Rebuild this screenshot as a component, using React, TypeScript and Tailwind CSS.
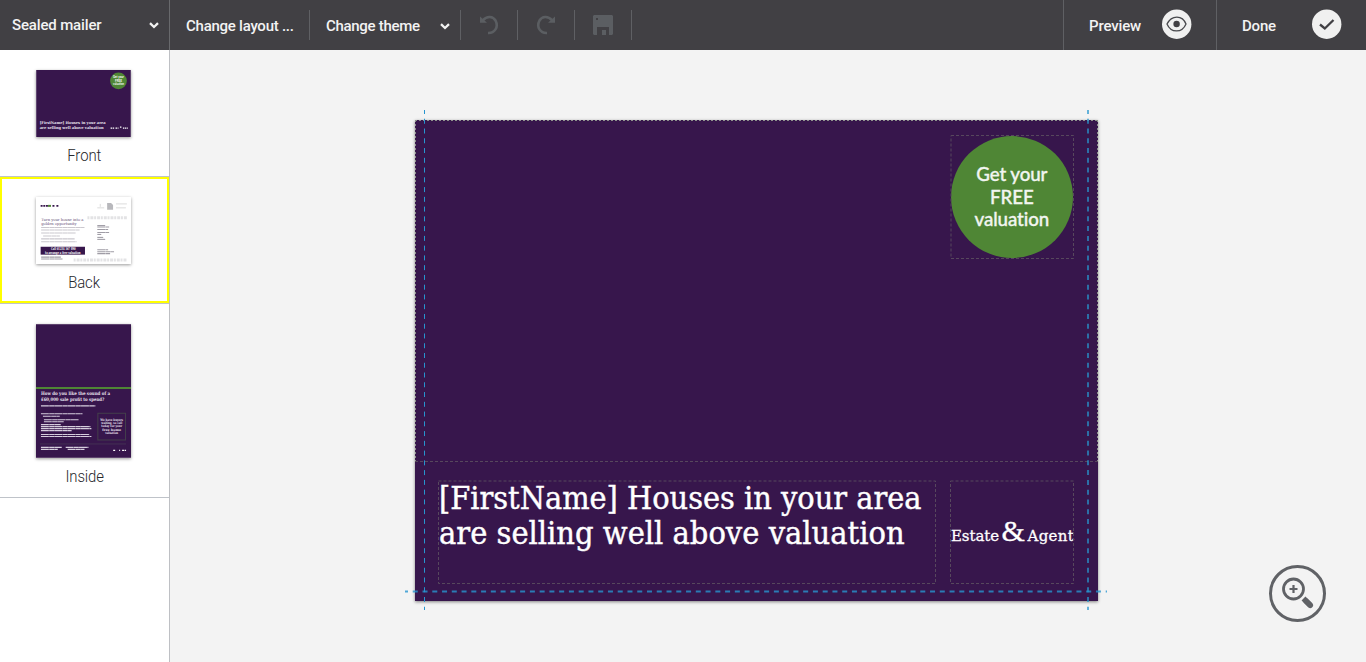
import type { ReactNode } from "react";

function Chevron() {
  return (
    <svg width="10" height="7" viewBox="0 0 10 7" fill="none" stroke="#f3f3f3" strokeWidth="2.300">
      <path d="M1 1.200 5 5l4-3.800" />
    </svg>
  );
}

function IconCell({ children }: { children: ReactNode }) {
  return <div className="flex h-[30px] w-[57px] items-center justify-center border-r border-[#5f6064] text-[#5b5e62]">{children}</div>;
}

function Undo({ flip = false }: { flip?: boolean }) {
  return (
    <svg width="20" height="20" viewBox="0 0 20 20" fill="none" className={flip ? "-scale-x-100" : ""}>
      <path d="M4 5.200C8.200 .5 14 1.300 16.500 5.500C20 12.200 15.500 18.300 9 18" stroke="currentColor" strokeWidth="2.600" />
      <path d="M1 1.500v6.300h7z" fill="currentColor" />
    </svg>
  );
}

function Toolbar() {
  return (
    <header className="flex h-[50px] shrink-0 items-center bg-[#414044] font-['Roboto',sans-serif] text-[15px] font-medium text-[#f3f3f3]">
      <div className="flex h-full w-[170px] items-center justify-between border-r border-[#68696c] pr-[10px] pl-3">
        <span className="tracking-[-0.15px]">Sealed mailer</span>
        <Chevron />
      </div>
      <div className="flex h-[30px] w-[140px] items-center border-r border-[#5f6064] pl-4 whitespace-nowrap">
        <span className="pt-0.5 tracking-[-0.25px]">Change layout ...</span>
      </div>
      <div className="flex h-[30px] w-[151px] items-center justify-between border-r border-[#5f6064] pt-0.5 pr-[10px] pl-4">
        <span className="tracking-[-0.3px]">Change theme</span>
        <Chevron />
      </div>
      <IconCell><Undo /></IconCell>
      <IconCell><Undo flip /></IconCell>
      <IconCell>
        <svg width="20" height="20" viewBox="0 0 20 20" fill="currentColor">
          <path fillRule="evenodd" d="M1 0h18l1 1v18l-1 1h-3v-8H4v8H1l-1-1V1zM3 3v2h2V3zM9 15h4v5H9z" />
        </svg>
      </IconCell>
      <div className="ml-auto flex h-full items-center">
        <div className="flex h-full w-[153px] items-center justify-between border-l border-[#5f6064] pr-[24px] pl-[25px]">
          <span className="pt-0.5 tracking-[-0.15px]">Preview</span>
          <svg width="30" height="30" viewBox="0 0 30 30" className="-mt-0.5">
            <circle cx="14.700" cy="15.200" r="14.700" fill="#f0f0f0" />
            <path d="M5 15C9.500 5.700 20.500 5.700 24 15 20 24.300 9 24.300 5 15z" fill="none" stroke="#47484c" strokeWidth="1.300" />
            <circle cx="14.600" cy="15" r="3.200" fill="#414044" />
          </svg>
        </div>
        <div className="flex h-full w-[150px] items-center justify-between border-l border-[#5f6064] pr-[24px] pl-[25px]">
          <span className="pt-0.5 tracking-[-0.2px]">Done</span>
          <svg width="30" height="30" viewBox="0 0 30 30" className="-mt-0.5">
            <circle cx="14.700" cy="15.200" r="14.700" fill="#f0f0f0" />
            <path d="m8 15.500 4.800 4L21.500 11" fill="none" stroke="#414044" strokeWidth="2.300" />
          </svg>
        </div>
      </div>
    </header>
  );
}

const PURPLE = "#37164c";

function Line({ x, y, w, children, size = 4, color = "#e8e1ed", bold = true, serif = true }: { x: number; y: number; w: number; children: string; size?: number; color?: string; bold?: boolean; serif?: boolean }) {
  return <text x={x} y={y} textLength={w} lengthAdjust="spacingAndGlyphs" fontSize={size} fill={color} fontWeight={bold ? 700 : 400} fontFamily={serif ? "DejaVu Serif, serif" : "Lato, sans-serif"}>{children}</text>;
}

function Bars({ rows, color }: { rows: number[][]; color: string }) {
  return <>{rows.map(([x, y, w], i) => <path key={i} d={`M${x} ${y}h${w}`} stroke={color} strokeWidth="1.100" strokeDasharray="8 .3 5 .2" />)}</>;
}

function FrontThumb() {
  return (
    <svg width="95" height="67" viewBox="0 0 96 68" className="mb-px shadow-[0_1px_3px_#0006]">
      <rect width="96" height="68" fill={PURPLE} />
      <circle cx="83.500" cy="11" r="8.500" fill="#4f8635" />
      <Line x={78} y={8.500} w={11} size={3.500} serif={false} color="#fff">Get your</Line>
      <Line x={80} y={12} w={7} size={3.500} serif={false} color="#fff">FREE</Line>
      <Line x={78} y={15.500} w={11} size={3.500} serif={false} color="#fff">valuation</Line>
      <Line x={3.500} y={54.500} w={67}>[FirstName] Houses in your area</Line>
      <Line x={3.500} y={59.500} w={65}>are selling well above valuation</Line>
      <path d="M75.500 59h4m1 0h3m1.500-1h2m1 1h5" stroke="#fff" strokeWidth="1.200" strokeDasharray="1.500 .6" />
    </svg>
  );
}

function BackThumb() {
  return (
    <svg width="95" height="67" viewBox="0 0 96 68" className="mb-px shadow-[0_1px_3px_#0006]">
      <rect width="96" height="68" fill="#fff" />
      <path d="M4.500 9h8m4 0h2m2 0h2" stroke={PURPLE} strokeWidth="1.800" strokeDasharray="2 .7" />
      <path d="M12 9h3" stroke="#4f8635" strokeWidth="2" />
      <path d="M62 11h7m-4-4v3M81 7h11m-11 4h10" stroke="#ccc" strokeWidth=".7" />
      <path d="M72 6h4l2 2v5h-6z" fill="#b8b8bc" />
      <Line x={5} y={24} w={43} color="#655078" bold={false}>Turn your house into a</Line>
      <Line x={5} y={28} w={36} color="#655078" bold={false}>golden opportunity</Line>
      <path d="M52 21h40M38 64h54" stroke="#e3e3e5" strokeWidth="3" strokeDasharray="2 1 3 .8" />
      <Bars color="#cac7ce" rows={[[5, 31, 44], [5, 33.500, 39], [5, 36.500, 35], [7, 39.500, 17], [5, 42.500, 34], [5, 45.500, 36]]} />
      <Bars color="#9f9ca5" rows={[[62, 29, 8], [62, 30.500, 12], [62, 33, 11], [62, 36, 12], [62, 38, 4], [62, 41, 6], [62, 43, 8], [62, 53.500, 11], [62, 55.500, 17], [62, 57.500, 13], [5, 61, 20], [5, 63, 22]]} />
      <rect x="4.500" y="50.500" width="45" height="8" fill={PURPLE} />
      <Line x={15} y={54} w={25} color="#fff">Call 01234 567 890</Line>
      <Line x={9} y={57.500} w={36} color="#fff">to arrange a free valuation</Line>
    </svg>
  );
}

function InsideThumb() {
  return (
    <svg width="95" height="134" viewBox="0 0 96 135" className="mb-px shadow-[0_1px_3px_#0006]">
      <rect width="96" height="135" fill={PURPLE} />
      <path d="M0 64.500h96" stroke="#4f8635" strokeWidth="2" />
      <rect x="62.500" y="90" width="28" height="27" fill="none" stroke="#44404b" />
      <Line x={5} y={72} w={70} size={4.800}>How do you like the sound of a</Line>
      <Line x={5} y={78} w={64} size={4.800}>£60,000 sale profit to spend?</Line>
      <Bars color="#d6cedd" rows={[[5, 82.500, 55], [5, 90.500, 42], [7, 93, 17], [8, 96.500, 35], [8, 98.500, 20], [5, 101.500, 20], [5, 103.500, 50], [5, 105.500, 51], [5, 107.500, 31], [5, 111.500, 49], [5, 113.500, 51], [5, 124.500, 21], [5, 126.500, 17], [30, 124.500, 23], [32, 126.500, 17]]} />
      <Line x={65} y={97.500} w={23} size={3.500}>We have buyers</Line>
      <Line x={66} y={100.900} w={21} size={3.500}>waiting, so call</Line>
      <Line x={66} y={104.300} w={21} size={3.500}>today for your</Line>
      <Line x={67} y={107.700} w={19} size={3.500}>free home</Line>
      <Line x={70} y={111} w={13} size={3.500}>valuation</Line>
      <path d="M4 121h87" stroke="#4a3b55" strokeWidth=".7" />
      <path d="M78 127.500h2m4 0h1m2 0h4" stroke="#fff" strokeWidth="1.300" strokeDasharray="2 .6" />
    </svg>
  );
}

function PageItem({ label, children, selected = false, tall = false }: { label: string; children: ReactNode; selected?: boolean; tall?: boolean }) {
  return (
    <div className={`flex flex-col items-center border-b border-b-[#bfc3c9] pt-5 pr-[2px] ${tall ? "h-[194px]" : "h-[127px]"} ${selected ? "shadow-[inset_0_0_0_2px_#ffff00]" : ""}`}>
      {children}
      <span className="mt-[6px] ml-0.5 scale-x-[0.93] text-[16px] leading-6 font-light tracking-[-0.1px] text-[#26272b]">{label}</span>
    </div>
  );
}

function Artboard() {
  return (
    <div className="relative mt-[70px] ml-[245px] h-[481px] w-[683px] bg-[#37164c] text-white shadow-[0_1px_3px_#0007]">
      <div className="absolute top-[15px] left-[535px] flex h-[124px] w-[124px] items-center justify-center">
        <div className="flex h-[122px] w-[122px] items-center justify-center rounded-full bg-[#4f8635] text-center font-['Lato',sans-serif] text-[19.500px] leading-[22.500px] font-medium tracking-[-0.1px] text-[#f2f5f0]">
          <span className="scale-x-[0.96] [-webkit-text-stroke:0.350px_#f2f5f0]">Get your<br />FREE<br />valuation</span>
        </div>
      </div>
      <div className="absolute top-[361px] left-[24px] w-[497px] font-['DejaVu_Serif_Condensed','DejaVu_Serif',serif] text-[31px] leading-[35px] whitespace-nowrap [-webkit-text-stroke:0.400px_#fff]">
        <div className="w-max origin-left scale-x-[1.035]">[FirstName] Houses in your area</div>
        <div className="w-max origin-left scale-x-[1.040]">are selling well above valuation</div>
      </div>
      <div className="absolute top-[395px] left-[536px] flex w-[123px] items-baseline justify-between font-['DejaVu_Serif',serif] text-[15px] leading-8 whitespace-nowrap [-webkit-text-stroke:0.300px_#fff]">
        <span className="tracking-[-0.1px]">Estate</span>
        <span className="-mx-1 font-['Liberation_Serif',serif] text-[30px]">&amp;</span>
        <span className="tracking-[0.3px]">Agent</span>
      </div>
      <svg className="pointer-events-none absolute -top-[10px] -left-[10px]" width="703" height="501" viewBox="405 110 703 501" fill="none">
        <g stroke="#57485d" strokeDasharray="3 2">
          <path d="M415 461.500h683" />
          <rect x="951" y="135.500" width="122.500" height="123" />
          <rect x="438.500" y="481" width="497" height="102.500" />
          <rect x="950.500" y="481" width="123" height="102.500" />
        </g>
        <path d="M415 120.500h683M415.500 120v341M1097.500 120v341" stroke="#8d918c" strokeDasharray="2 2" />
        <g stroke="#2795cf" strokeDasharray="5 4.760">
          <path d="M424.500 110v500" strokeDashoffset="1" />
          <path d="M1088 110v500" strokeWidth="2" opacity=".7" strokeDashoffset="1" />
          <path d="M405 591.500h702" strokeWidth="2" opacity=".8" strokeDashoffset="2" />
        </g>
      </svg>
    </div>
  );
}

export default function App() {
  return (
    <div className="flex h-[662px] w-full flex-col overflow-hidden bg-[#f3f3f3] font-['Roboto',sans-serif]">
      <Toolbar />
      <div className="flex min-h-0 flex-1">
        <aside className="w-[170px] shrink-0 border-r border-[#bec0c4] bg-white">
          <PageItem label="Front"><FrontThumb /></PageItem>
          <PageItem label="Back" selected><BackThumb /></PageItem>
          <PageItem label="Inside" tall><InsideThumb /></PageItem>
        </aside>
        <main className="relative flex-1">
          <div className="flex"><Artboard /></div>
          <button aria-label="Zoom in" className="absolute right-10 bottom-10">
            <svg width="57" height="57" viewBox="0 0 57 57" fill="none" stroke="#606266">
              <circle cx="28.500" cy="28.500" r="27" strokeWidth="3" />
              <circle cx="24.500" cy="24" r="10" strokeWidth="2.800" />
              <path d="M20.500 24h8M24.500 20v8" strokeWidth="2.200" />
              <path d="m34.500 33.500 7 7" strokeWidth="5.500" />
              <path d="m37 36 4.300 4.300" strokeWidth="5.500" strokeLinecap="round" />
            </svg>
          </button>
        </main>
      </div>
    </div>
  );
}
